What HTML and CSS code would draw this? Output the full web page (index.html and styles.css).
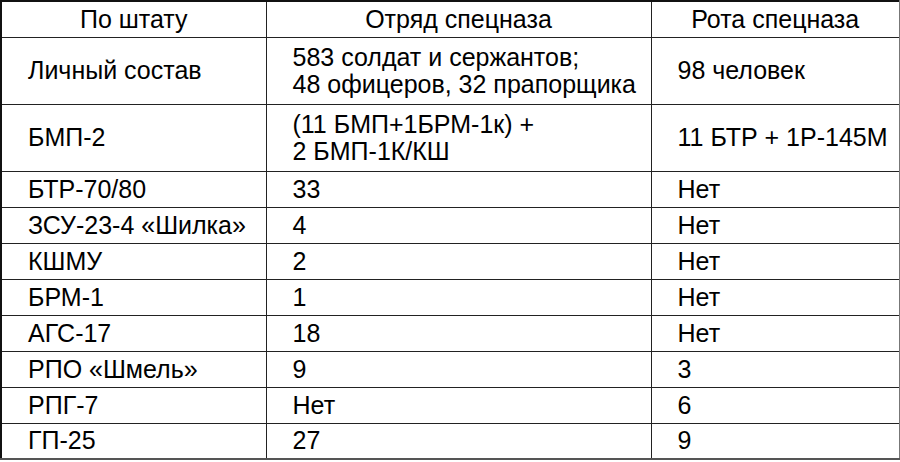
FILE: index.html
```html
<!DOCTYPE html>
<html lang="ru">
<head>
<meta charset="utf-8">
<link rel="stylesheet" href="styles.css">
</head>
<body>
<table class="staff">
  <colgroup>
    <col class="c1"><col class="c2"><col class="c3">
  </colgroup>
  <thead>
    <tr class="head"><th>По штату</th><th>Отряд спецназа</th><th>Рота спецназа</th></tr>
  </thead>
  <tbody>
    <tr class="tall"><td>Личный состав</td><td>583 солдат и сержантов;<br>48 офицеров, 32 прапорщика</td><td>98 человек</td></tr>
    <tr class="tall"><td>БМП-2</td><td>(11 БМП+1БРМ-1к) +<br>2 БМП-1К/КШ</td><td>11 БТР + 1Р-145М</td></tr>
    <tr><td>БТР-70/80</td><td>33</td><td>Нет</td></tr>
    <tr><td>ЗСУ-23-4 «Шилка»</td><td>4</td><td>Нет</td></tr>
    <tr><td>КШМУ</td><td>2</td><td>Нет</td></tr>
    <tr><td>БРМ-1</td><td>1</td><td>Нет</td></tr>
    <tr><td>АГС-17</td><td>18</td><td>Нет</td></tr>
    <tr><td>РПО «Шмель»</td><td>9</td><td>3</td></tr>
    <tr><td>РПГ-7</td><td>Нет</td><td>6</td></tr>
    <tr><td>ГП-25</td><td>27</td><td>9</td></tr>
  </tbody>
</table>
</body>
</html>
```
FILE: styles.css
```css
html, body {
  margin: 0;
  padding: 0;
  background: #ffffff;
}
.staff {
  border-collapse: collapse;
  table-layout: fixed;
  width: 899px;
  font-family: "Liberation Sans", Arial, sans-serif;
  font-size: 25px;
  line-height: 27px;
  color: #000;
}
.c1 { width: 265px; }
.c2 { width: 385px; }
.c3 { width: 249px; }
.staff tr { height: 36px; }
.staff tr.tall { height: 67px; }
.staff th, .staff td {
  border: 1px solid #222;
  padding: 0 0 0 26px;
  text-align: left;
  vertical-align: middle;
  white-space: nowrap;
}
.staff th {
  font-weight: normal;
  text-align: center;
  padding: 0;
}
.staff tr.head th { border-top: 2px solid #111; }
.staff tr > :first-child { border-left: 2px solid #111; }
.staff tr > :last-child { border-right: 2px solid #777; }
.staff tbody tr:last-child td { border-bottom: 2px solid #555; }
```
